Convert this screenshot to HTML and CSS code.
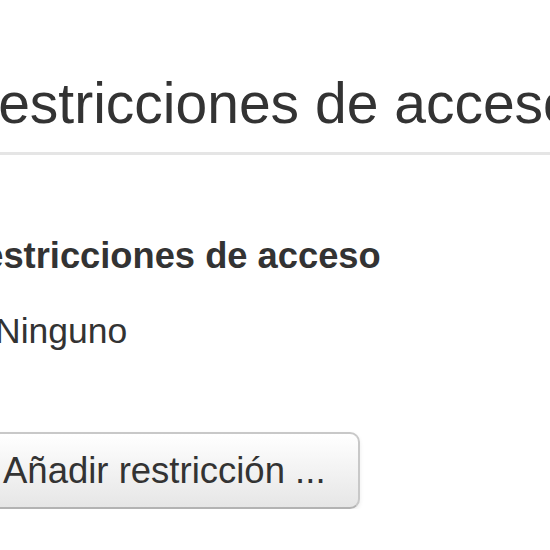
FILE: index.html
```html
<!DOCTYPE html>
<html lang="es">
<head>
    <meta charset="UTF-8">
    <meta name="viewport" content="width=device-width, initial-scale=1.0">
    <title>Restricciones de acceso</title>
    <link rel="stylesheet" href="styles.css">
</head>
<body>
    <div class="page">
        <!-- fieldset legend -->
        <div class="legend">Restricciones de acceso</div>

        <!-- form item -->
        <div class="fitem">
            <div class="flabel">Restricciones de acceso</div>
            <div class="fstatic">Ninguno</div>
            <div class="factions">
                <button class="btn">Añadir restricción ...</button>
            </div>
        </div>
    </div>
</body>
</html>
```

FILE: styles.css
```css
body {
    font-family: "Liberation Sans", Arial, Helvetica, sans-serif;
    margin: 0;
    padding: 0;
    background-color: #fff;
    color: #333;
    overflow: hidden;
}

.page {
    margin-left: -43px;
    width: 640px;
}

/* legend */
.legend {
    margin-top: 54px;
    font-size: 57px;
    line-height: 98px;
    white-space: nowrap;
    border-bottom: 3px solid #e5e5e5;
}

.fitem {
    padding-top: 75px;
}

.flabel {
    font-size: 36.3px;
    font-weight: bold;
    line-height: 52px;
    white-space: nowrap;
}

.fstatic {
    margin-top: 23px;
    padding-left: 38px;
    font-size: 35.5px;
    line-height: 52px;
}

.factions {
    margin-top: 75px;
    padding-left: 12px;
}

.btn {
    font-family: inherit;
    font-size: 36.5px;
    line-height: 53px;
    color: #333;
    padding: 10px 32px;
    border: 2px solid #c8c8c8;
    border-bottom-color: #b3b3b3;
    border-radius: 10px;
    background-color: #f2f2f2;
    background-image: linear-gradient(to bottom, #ffffff, #e6e6e6);
    box-shadow: 0 2px 4px rgba(0, 0, 0, 0.08);
    white-space: nowrap;
    cursor: pointer;
}
```
